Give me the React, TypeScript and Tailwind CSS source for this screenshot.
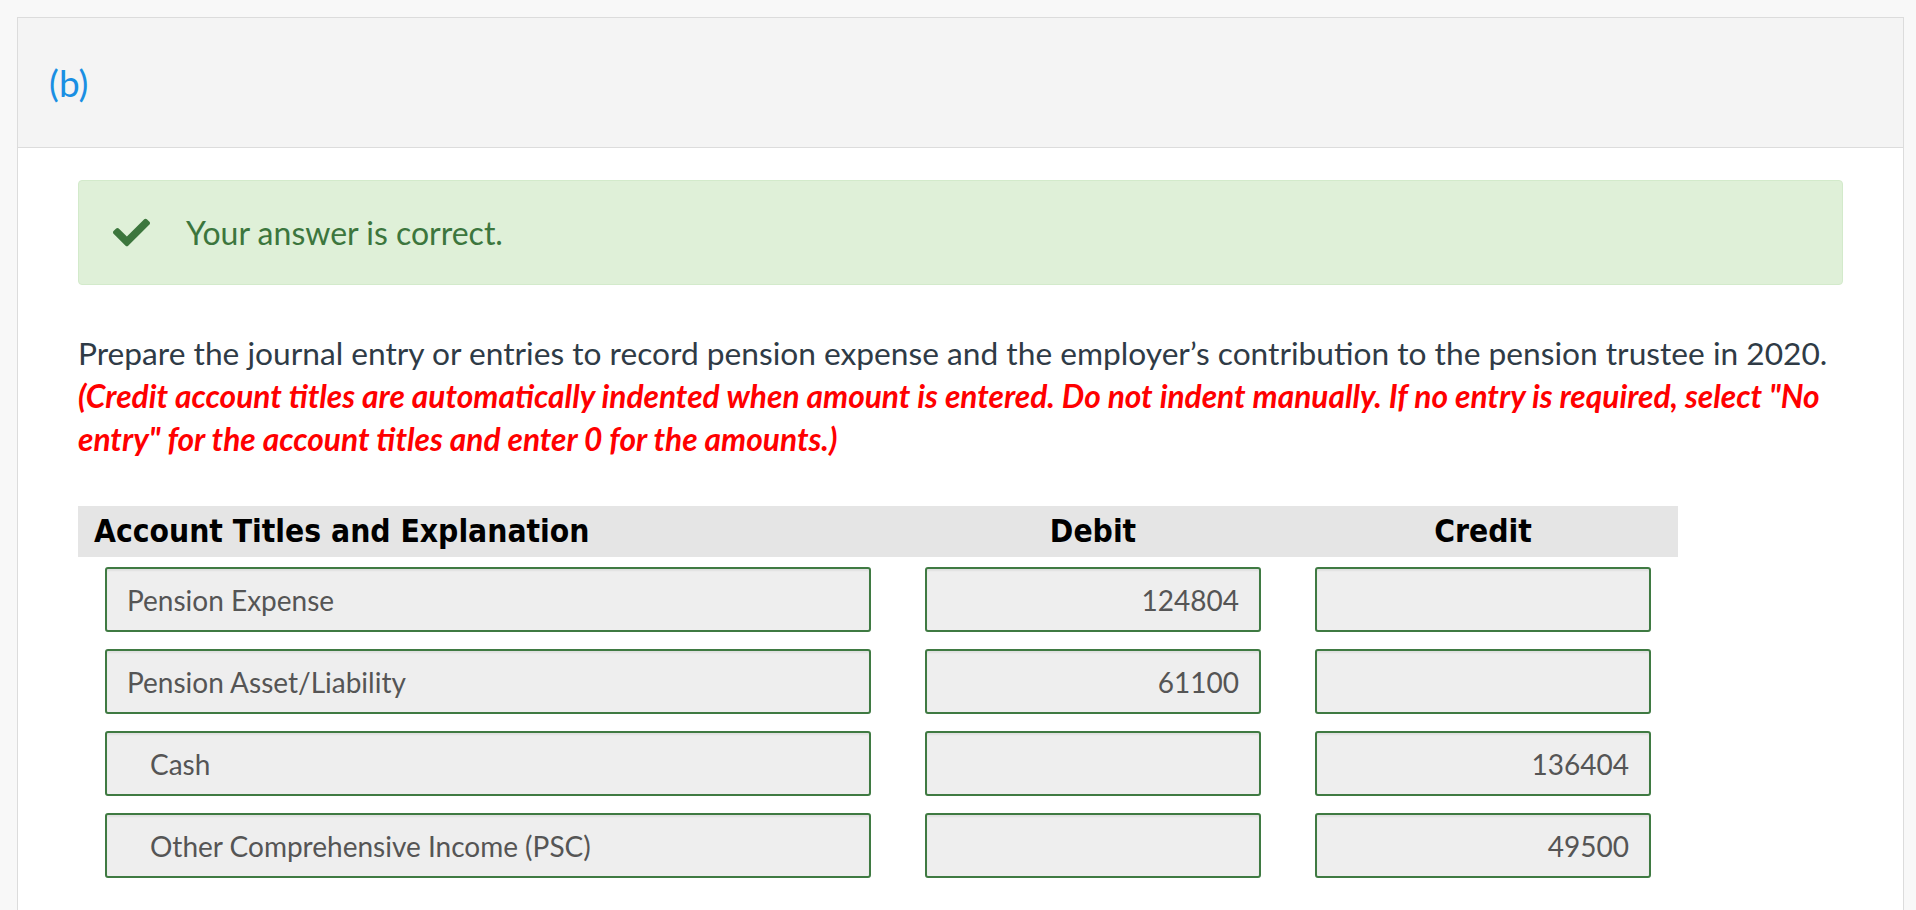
import { FaCheck } from 'react-icons/fa'

interface Entry {
  account: string
  debit: string
  credit: string
  indent: boolean
}

const entries: Entry[] = [
  { account: 'Pension Expense', debit: '124804', credit: '', indent: false },
  { account: 'Pension Asset/Liability', debit: '61100', credit: '', indent: false },
  { account: 'Cash', debit: '', credit: '136404', indent: true },
  { account: 'Other Comprehensive Income (PSC)', debit: '', credit: '49500', indent: true },
]

const boxClass =
  'flex h-[65px] items-center rounded-[3px] border-2 border-[#3f7a42] bg-[#eeeeee] text-[28px] text-[#555555] shadow-[inset_0_2px_2px_rgba(0,0,0,0.06)]'

const App: React.FC = () => {
  return (
    <div className="h-[910px] w-full overflow-hidden bg-[#f8f8f8] pl-[17px] pr-[12px] pt-[17px] font-['Lato',sans-serif]">
      <div className="h-[920px] border border-[#dcdcdc] bg-white">
        <div className="flex h-[130px] items-center border-b border-[#dcdcdc] bg-[#f4f4f4] pl-[31px]">
          <span className="text-[37px] text-[#1a8fe3]">(b)</span>
        </div>

        <div className="px-[60px] pt-[32px]">
          <div className="flex h-[105px] items-center rounded-[4px] border border-[#d3eacb] bg-[#dff0d8] pl-[34px]">
            <FaCheck className="h-[37px] w-[37px] text-[#3c763d]" />
            <span className="ml-[36px] text-[32px] text-[#3c763d]">Your answer is correct.</span>
          </div>

          <div className="mt-[47px] text-[31.7px] leading-[43px]">
            <p className="text-[#2f3b46]">
              Prepare the journal entry or entries to record pension expense and the employer’s contribution to the
              pension trustee in 2020.
            </p>
            <p className="font-bold italic text-[#ff0000]">
              (Credit account titles are automatically indented when amount is entered. Do not indent manually. If no
              entry is required, select "No entry" for the account titles and enter 0 for the amounts.)
            </p>
          </div>

          <div className="mt-[45px] w-[1600px]">
            <div className="grid h-[51px] grid-cols-[777px_336px_336px] items-center gap-x-[54px] bg-[#e5e5e5] pl-[16px] pr-[27px] font-['DejaVu_Sans_Condensed','DejaVu_Sans',sans-serif] text-[31.5px] font-bold text-black font-stretch-condensed">
              <span>Account Titles and Explanation</span>
              <span className="text-center">Debit</span>
              <span className="text-center">Credit</span>
            </div>

            <div className="mt-[10px] flex flex-col gap-[17px] px-[27px]">
              {entries.map((entry) => (
                <div key={entry.account} className="grid grid-cols-[766px_336px_336px] gap-x-[54px]">
                  <div className={`${boxClass} ${entry.indent ? 'pl-[43px]' : 'pl-[20px]'}`}>{entry.account}</div>
                  <div className={`${boxClass} justify-end pr-[20px]`}>{entry.debit}</div>
                  <div className={`${boxClass} justify-end pr-[20px]`}>{entry.credit}</div>
                </div>
              ))}
            </div>
          </div>
        </div>
      </div>
    </div>
  )
}

export default App
